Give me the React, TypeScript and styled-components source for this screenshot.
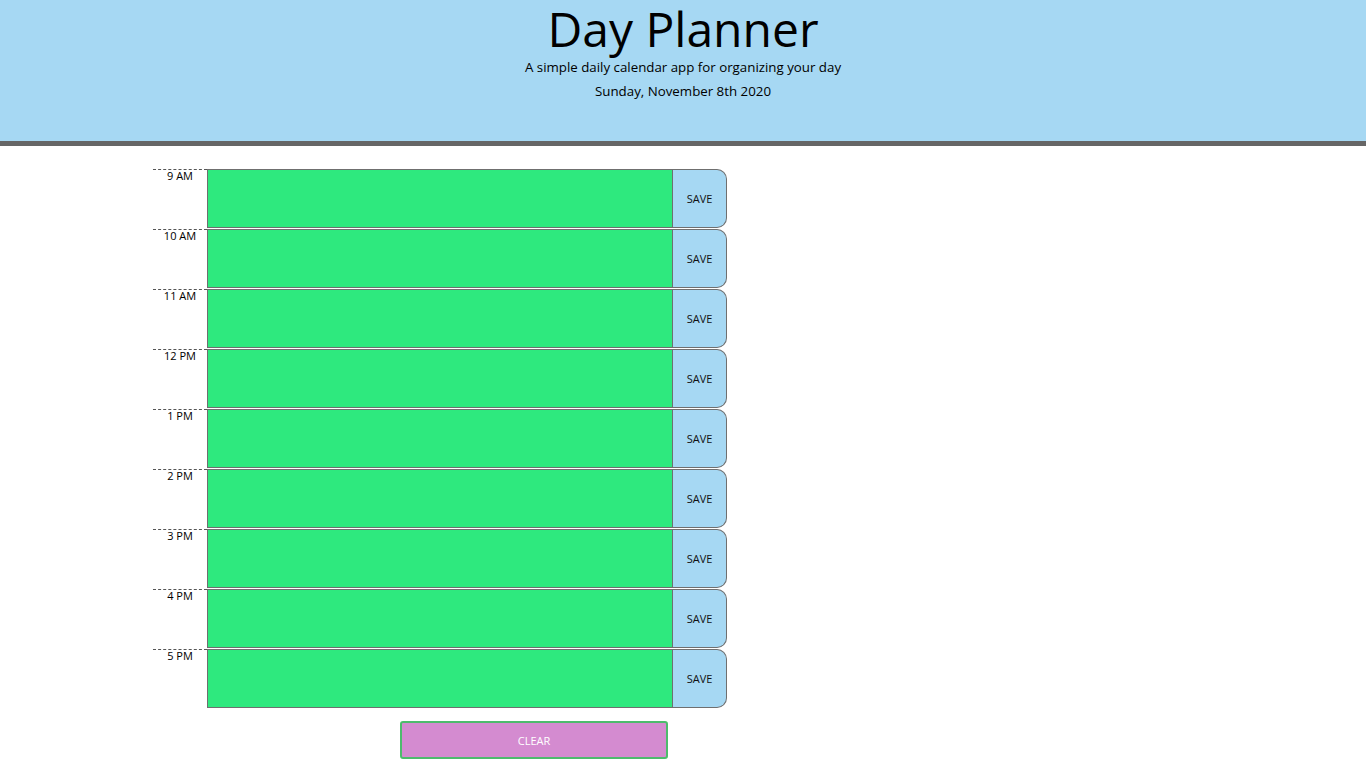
import styled, { createGlobalStyle } from "styled-components";

const hours = ["9 AM", "10 AM", "11 AM", "12 PM", "1 PM", "2 PM", "3 PM", "4 PM", "5 PM"];

export default function App() {
  return (
    <>
      <GlobalStyle />
      <Jumbotron>
        <Title>Day Planner</Title>
        <Lead>A simple daily calendar app for organizing your day</Lead>
        <CurrentDay>Sunday, November 8th 2020</CurrentDay>
      </Jumbotron>
      <Planner>
        {hours.map((hour) => (
          <TimeBlock key={hour}>
            <Hour>{hour}</Hour>
            <Description />
            <SaveBtn>SAVE</SaveBtn>
          </TimeBlock>
        ))}
        <ClearBtn>CLEAR</ClearBtn>
      </Planner>
    </>
  );
}

const GlobalStyle = createGlobalStyle`
  body {
    margin: 0;
    background: #fff;
    font-family: "Open Sans", "Liberation Sans", sans-serif;
    color: #000;
  }
`;

const Jumbotron = styled.header`
  height: 141px;
  box-sizing: content-box;
  background: #a6d8f3;
  border-bottom: 5px solid #666666;
  text-align: center;
`;

const Title = styled.h1`
  margin: 0;
  font-size: 48px;
  font-weight: 400;
  line-height: 57px;
`;

const Lead = styled.p`
  margin: 0;
  font-size: 13.3px;
  line-height: 20px;
`;

const CurrentDay = styled.p`
  margin: 4px 0 0;
  font-size: 13.3px;
  line-height: 20px;
`;

const Planner = styled.main`
  padding: 23px 0 0 153px;
  display: flex;
  flex-direction: column;
`;

const TimeBlock = styled.div`
  display: flex;
  width: 574px;
  height: 60px;
`;

const Hour = styled.div`
  width: 54px;
  box-sizing: border-box;
  border-top: 1px dashed #555;
  text-align: center;
  font-size: 11px;
  line-height: 11px;
`;

const Description = styled.div`
  width: 466px;
  height: 59px;
  box-sizing: border-box;
  background: #2ee97e;
  border: 1px solid #6f6f6f;
`;

const SaveBtn = styled.button`
  width: 54px;
  height: 59px;
  box-sizing: border-box;
  background: #a6d8f3;
  border: 1px solid #6f6f6f;
  border-left-width: 0;
  border-radius: 0 10px 10px 0;
  font-family: "Open Sans", "Liberation Sans", sans-serif;
  font-size: 11px;
  color: #111;
  padding: 0;
`;

const ClearBtn = styled.button`
  margin: 12px 0 0 247px;
  width: 268px;
  height: 38px;
  box-sizing: border-box;
  background: #d48bd0;
  border: 2px solid #4dbb6d;
  border-radius: 3px;
  color: #fff;
  font-family: "Open Sans", "Liberation Sans", sans-serif;
  font-size: 11px;
  padding: 0;
`;
